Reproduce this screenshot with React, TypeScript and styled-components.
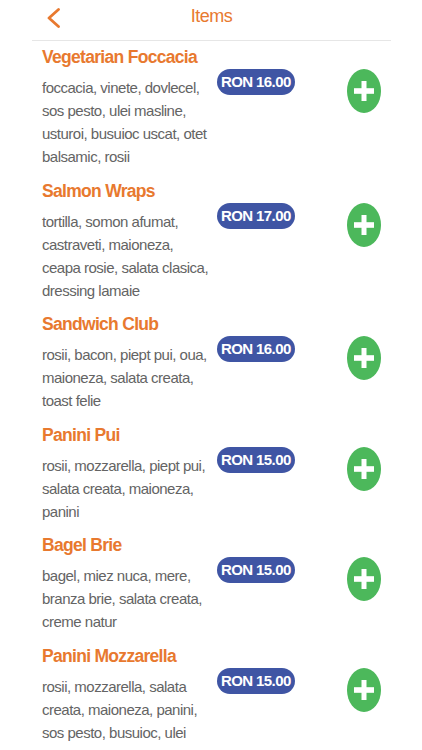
import React from "react";
import styled, { createGlobalStyle } from "styled-components";

interface MenuItem {
  name: string;
  ingredients: string;
  price: number;
}

const items: MenuItem[] = [
  {
    name: "Vegetarian Foccacia",
    ingredients:
      "foccacia, vinete, dovlecel, sos pesto, ulei masline, usturoi, busuioc uscat, otet balsamic, rosii",
    price: 16,
  },
  {
    name: "Salmon Wraps",
    ingredients:
      "tortilla, somon afumat, castraveti, maioneza, ceapa rosie, salata clasica, dressing lamaie",
    price: 17,
  },
  {
    name: "Sandwich Club",
    ingredients: "rosii, bacon, piept pui, oua, maioneza, salata creata, toast felie",
    price: 16,
  },
  {
    name: "Panini Pui",
    ingredients: "rosii, mozzarella, piept pui, salata creata, maioneza, panini",
    price: 15,
  },
  {
    name: "Bagel Brie",
    ingredients: "bagel, miez nuca, mere, branza brie, salata creata, creme natur",
    price: 15,
  },
  {
    name: "Panini Mozzarella",
    ingredients: "rosii, mozzarella, salata creata, maioneza, panini, sos pesto, busuioc, ulei",
    price: 15,
  },
];

const App: React.FC = () => {
  return (
    <Page>
      <GlobalStyle />
      <Header>
        <BackButton aria-label="Back">
          <svg width="13" height="20" viewBox="0 0 13 20">
            <polyline
              points="11.5,1.5 2,10 11.5,18.5"
              fill="none"
              stroke="#e8792f"
              strokeWidth="2.8"
              strokeLinecap="round"
              strokeLinejoin="round"
            />
          </svg>
        </BackButton>
        <HeaderTitle>Items</HeaderTitle>
      </Header>
      <List>
        {items.map((item) => (
          <Item key={item.name}>
            <Info>
              <Title>{item.name}</Title>
              <Description>{item.ingredients}</Description>
            </Info>
            <Price>RON {item.price.toFixed(2)}</Price>
            <AddButton aria-label={`Add ${item.name}`}>
              <svg width="20" height="20" viewBox="0 0 20 20">
                <rect x="0" y="7.2" width="20" height="5.6" fill="#fff" />
                <rect x="7.5" y="0" width="5" height="20" fill="#fff" />
              </svg>
            </AddButton>
          </Item>
        ))}
      </List>
    </Page>
  );
};

const GlobalStyle = createGlobalStyle`
  body {
    margin: 0;
    background: #fff;
    font-family: "Liberation Sans", Arial, sans-serif;
  }
`;

const Page = styled.div`
  width: 422px;
  height: 750px;
  overflow: hidden;
  background: #fff;
`;

const Header = styled.header`
  display: grid;
  grid-template-columns: 1fr auto 1fr;
  height: 40px;
  margin: 0 31px 0 32px;
  border-bottom: 1px solid #e6e6e6;
`;

const BackButton = styled.button`
  justify-self: start;
  align-self: start;
  width: 13px;
  height: 20px;
  margin: 8px 0 0 15px;
  padding: 0;
  border: none;
  background: none;
  cursor: pointer;

  svg {
    display: block;
  }
`;

const HeaderTitle = styled.h1`
  margin: 0;
  padding-top: 6px;
  font-size: 18px;
  line-height: 20px;
  font-weight: 400;
  letter-spacing: -0.5px;
  color: #e8792f;
`;

const List = styled.main`
  padding: 4px 41px 0 42px;
`;

const Item = styled.section`
  display: flex;
  align-items: flex-start;
  padding-bottom: 10.5px;
`;

const Info = styled.div`
  flex: 0 0 170px;
`;

const Title = styled.h2`
  margin: 0 0 7px;
  font-size: 17.5px;
  line-height: 24px;
  font-weight: 700;
  letter-spacing: -0.7px;
  color: #e8792f;
  white-space: nowrap;
`;

const Description = styled.p`
  margin: 0;
  font-size: 15px;
  line-height: 23px;
  letter-spacing: -0.5px;
  color: #646464;
`;

const Price = styled.span`
  flex: none;
  margin: 24px 0 0 5px;
  height: 26px;
  padding: 0 4px;
  border-radius: 13px;
  background: #3f55a4;
  color: #fff;
  font-size: 15px;
  line-height: 26px;
  font-weight: 700;
  letter-spacing: -0.6px;
`;

const AddButton = styled.button`
  flex: none;
  display: flex;
  align-items: center;
  justify-content: center;
  width: 34px;
  height: 44px;
  margin: 24px 0 0 auto;
  padding: 0;
  border: none;
  border-radius: 50%;
  background: #4cb85b;
  cursor: pointer;

  svg {
    display: block;
  }
`;

export default App;
